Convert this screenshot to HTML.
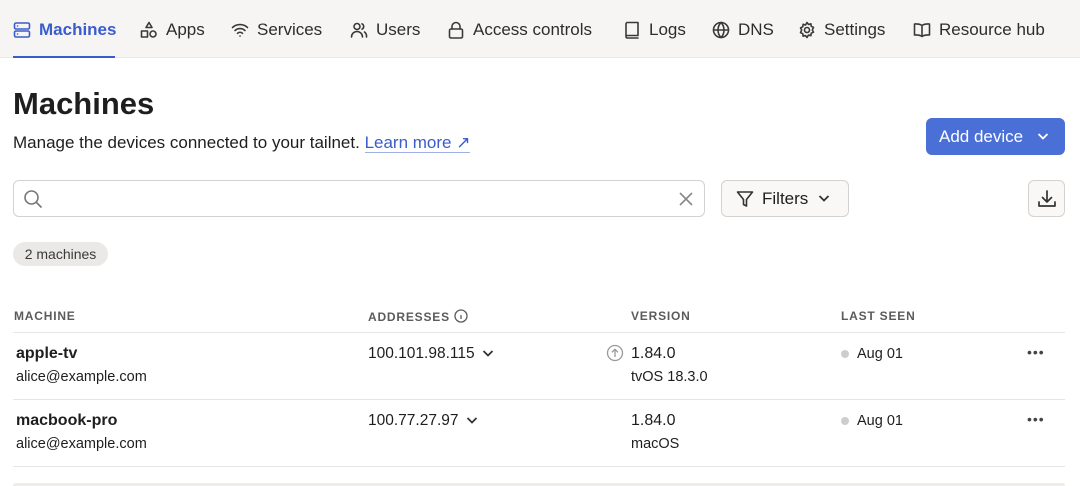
<!DOCTYPE html>
<html><head><meta charset="utf-8"><style>
*{box-sizing:border-box;margin:0;padding:0}
body{width:1080px;height:486px;overflow:hidden;background:#fff;font-family:"Liberation Sans",sans-serif;color:#1f1e1e;position:relative}
.nav{position:absolute;left:0;top:0;width:1080px;height:58px;background:#f7f5f4;border-bottom:1px solid #ebe8e6}
.ni{position:absolute;top:19px;font-size:17px;color:#2e2d2d;display:flex;align-items:center;gap:8px;height:22px}
.ni svg{width:18px;height:18px;fill:none;stroke:#3a3939;stroke-width:1.6;stroke-linecap:round;stroke-linejoin:round}
.act{color:#3a5ccc}.act svg{stroke:#3a5ccc}
.ul{position:absolute;left:13px;top:56px;width:102px;height:2px;background:#3a5ccc}
.abs{position:absolute}
h1{position:absolute;left:13px;top:86px;font-size:31px;font-weight:600;color:#1f1e1e}
.sub{left:13px;top:133px;font-size:17px;color:#1f1e1e}
.sub a{color:#3a5ccc;text-decoration:none;border-bottom:1px solid #9fb0e6}
.btn{left:926px;top:118px;width:139px;height:37px;background:#4a6fd6;border-radius:6px;color:#fff;font-size:17px;display:flex;align-items:center;padding-left:13px}
.search{left:13px;top:180px;width:692px;height:37px;border:1px solid #d4d1cf;border-radius:6px}
.filt{left:721px;top:180px;width:128px;height:37px;border:1px solid #d4d1cf;border-radius:6px;background:#f9f8f7;font-size:17px;display:flex;align-items:center;padding-left:14px;gap:8px}
.dl{left:1028px;top:180px;width:37px;height:37px;border:1px solid #d4d1cf;border-radius:6px;background:#f9f8f7}
.pill{left:13px;top:242px;width:95px;height:24px;background:#ebe9e7;border-radius:12px;font-size:14px;color:#3a3939;text-align:center;line-height:24px}
.th{top:309px;font-size:12px;font-weight:bold;letter-spacing:.8px;color:#5d5b5a}
.line{left:13px;width:1052px;height:1px;background:#e8e6e4}
.n{font-size:16px;font-weight:bold}.s{font-size:14.5px}.t{font-size:16px}
.a{font-size:15.5px}
.dot{width:8px;height:8px;border-radius:50%;background:#cfcdcb}
.more{font-size:14px;letter-spacing:1px;color:#444}
</style></head><body>
<div class="nav"></div>
<div class="ni act" style="left:13px"><svg viewBox="0 0 18 18"><rect x="1.5" y="2" width="15" height="6" rx="1.5"/><rect x="1.5" y="10" width="15" height="6" rx="1.5"/><path d="M4.5 5h.1M4.5 13h.1"/></svg><b style="font-weight:600">Machines</b></div>
<div class="ul"></div>
<div class="ni" style="left:140px"><svg viewBox="0 0 18 18"><path d="M9 1.5l3 5H6z"/><rect x="1.5" y="10" width="6" height="6"/><circle cx="13" cy="13" r="3"/></svg>Apps</div>
<div class="ni" style="left:231px"><svg viewBox="0 0 18 18"><path d="M1.5 6.5a11 11 0 0115 0M4 9.5a7.5 7.5 0 0110 0M6.5 12.3a3.5 3.5 0 015 0M9 15h.1"/></svg>Services</div>
<div class="ni" style="left:350px"><svg viewBox="0 0 18 18"><circle cx="7" cy="5.5" r="3"/><path d="M1.5 16a5.5 5.5 0 0111 0M12 2.8a3 3 0 010 5.4M14.5 11a5.5 5.5 0 012 5"/></svg>Users</div>
<div class="ni" style="left:447px"><svg viewBox="0 0 18 18"><rect x="2.5" y="8" width="13" height="9" rx="1.5"/><path d="M5 8V5.5a4 4 0 018 0V8"/></svg>Access controls</div>
<div class="ni" style="left:623px"><svg viewBox="0 0 18 18"><path d="M3 15V3a1.5 1.5 0 011.5-1.5H15v13H4.5A1.5 1.5 0 003 16a1.5 1.5 0 001.5 1H15"/></svg>Logs</div>
<div class="ni" style="left:712px"><svg viewBox="0 0 18 18"><circle cx="9" cy="9" r="7.5"/><path d="M1.5 9h15M9 1.5c-4 4-4 11 0 15M9 1.5c4 4 4 11 0 15"/></svg>DNS</div>
<div class="ni" style="left:798px"><svg viewBox="0 0 18 18"><circle cx="9" cy="9" r="2.5"/><path d="M9 1.5l1.5 2 2.4-.7.3 2.5 2.3 1L14.3 9l1.2 2.2-2.3 1-.3 2.5-2.4-.7L9 16.5 7.5 14.5l-2.4.7-.3-2.5-2.3-1L3.7 9 2.5 6.8l2.3-1 .3-2.5 2.4.7z"/></svg>Settings</div>
<div class="ni" style="left:913px"><svg viewBox="0 0 18 18"><path d="M9 4.5C7 3 4.5 2.8 1.5 3v11c3-.2 5.5 0 7.5 1.5 2-1.5 4.5-1.7 7.5-1.5V3c-3-.2-5.5 0-7.5 1.5zM9 4.5v11"/></svg>Resource hub</div>

<h1>Machines</h1>
<div class="abs sub">Manage the devices connected to your tailnet. <a>Learn more ↗</a></div>
<div class="abs btn">Add device<svg style="position:absolute;right:16px;top:14px" width="12" height="9" viewBox="0 0 12 9" fill="none" stroke="#fff" stroke-width="1.8"><path d="M1.5 2l4.5 4.5L10.5 2"/></svg></div>
<div class="abs search"><svg style="position:absolute;left:9px;top:8px" width="20" height="20" viewBox="0 0 20 20" fill="none" stroke="#777" stroke-width="1.6"><circle cx="8.5" cy="8.5" r="6.5"/><path d="M13.5 13.5l5 5"/></svg><svg style="position:absolute;right:11px;top:11px" width="14" height="14" viewBox="0 0 14 14" stroke="#888" stroke-width="1.6"><path d="M1 1l12 12M13 1L1 13"/></svg></div>
<div class="abs filt"><svg width="18" height="18" viewBox="0 0 18 18" fill="none" stroke="#333" stroke-width="1.6" stroke-linejoin="round"><path d="M1.5 2h15l-6 7.5V16l-3-1.5v-5z"/></svg>Filters<svg width="12" height="9" viewBox="0 0 12 9" fill="none" stroke="#333" stroke-width="1.8" style="margin-left:2px"><path d="M1.5 2l4.5 4.5L10.5 2"/></svg></div>
<div class="abs dl"><svg style="position:absolute;left:8px;top:8px" width="20" height="20" viewBox="0 0 20 20" fill="none" stroke="#333" stroke-width="1.7" stroke-linecap="round" stroke-linejoin="round"><path d="M10 2v11M5.5 8.5L10 13l4.5-4.5M2 13v4h16v-4"/></svg></div>
<div class="abs pill">2 machines</div>

<div class="abs th" style="left:14px">MACHINE</div>
<div class="abs th" style="left:368px">ADDRESSES <svg style="vertical-align:-2px" width="14" height="14" viewBox="0 0 14 14" fill="none" stroke="#5d5b5a" stroke-width="1.3"><circle cx="7" cy="7" r="6"/><path d="M7 6v4M7 4h.1"/></svg></div>
<div class="abs th" style="left:631px">VERSION</div>
<div class="abs th" style="left:841px">LAST SEEN</div>
<div class="abs line" style="top:332px"></div>

<div class="abs n" style="left:16px;top:345px">apple-tv</div>
<div class="abs s" style="left:16px;top:369px">alice@example.com</div>
<div class="abs a" style="left:368px;top:345px">100.101.98.115 <svg width="12" height="9" viewBox="0 0 12 9" fill="none" stroke="#333" stroke-width="1.8" style="margin-left:3px"><path d="M1.5 2l4.5 4.5L10.5 2"/></svg></div>
<svg class="abs" style="left:606px;top:344px" width="18" height="18" viewBox="0 0 18 18" fill="none" stroke="#999" stroke-width="1.3"><circle cx="9" cy="9" r="7.5"/><path d="M9 13V5.5M6 8.3L9 5.3l3 3"/></svg>
<div class="abs t" style="left:631px;top:345px">1.84.0</div>
<div class="abs s" style="left:631px;top:369px">tvOS 18.3.0</div>
<div class="abs dot" style="left:841px;top:350px"></div>
<div class="abs s" style="left:857px;top:346px">Aug 01</div>
<div class="abs more" style="left:1027px;top:344px">•••</div>
<div class="abs line" style="top:399px"></div>

<div class="abs n" style="left:16px;top:412px">macbook-pro</div>
<div class="abs s" style="left:16px;top:436px">alice@example.com</div>
<div class="abs a" style="left:368px;top:412px">100.77.27.97 <svg width="12" height="9" viewBox="0 0 12 9" fill="none" stroke="#333" stroke-width="1.8" style="margin-left:3px"><path d="M1.5 2l4.5 4.5L10.5 2"/></svg></div>
<div class="abs t" style="left:631px;top:412px">1.84.0</div>
<div class="abs s" style="left:631px;top:436px">macOS</div>
<div class="abs dot" style="left:841px;top:417px"></div>
<div class="abs s" style="left:857px;top:413px">Aug 01</div>
<div class="abs more" style="left:1027px;top:411px">•••</div>
<div class="abs line" style="top:466px"></div>
<div class="abs" style="left:13px;top:483px;width:1052px;height:3px;background:#eeecea;border-radius:3px 3px 0 0"></div>
</body></html>
